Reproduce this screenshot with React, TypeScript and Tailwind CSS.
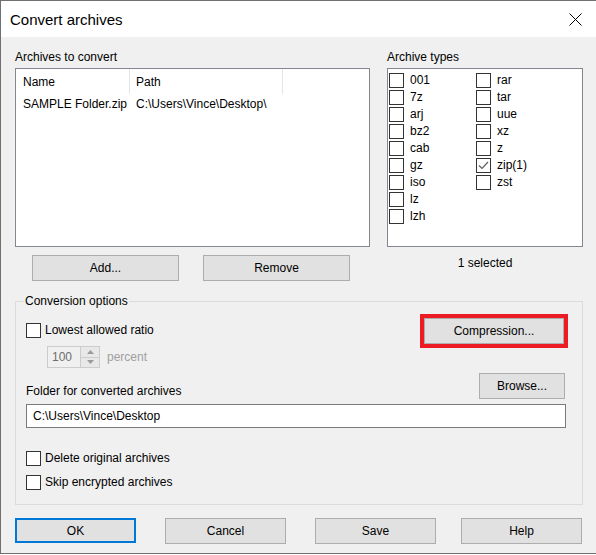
import React from 'react';

const archiveTypesLeft = ['001', '7z', 'arj', 'bz2', 'cab', 'gz', 'iso', 'lz', 'lzh'];
const archiveTypesRight = ['rar', 'tar', 'uue', 'xz', 'z', 'zip(1)', 'zst'];

function CheckBox({ checked = false }: { checked?: boolean }) {
  return (
    <span className="w-[15px] h-[15px] shrink-0 border border-[#333333] bg-white flex items-center justify-center">
      {checked && (
        <svg width="11" height="9" viewBox="0 0 11 9" fill="none">
          <path d="M1 4.5 L4 7.5 L10 1" stroke="#5f5f5f" strokeWidth="1.2" />
        </svg>
      )}
    </span>
  );
}

function TypeRow({ label }: { label: string }) {
  return (
    <div className="h-[17px] flex items-center gap-[6px]">
      <CheckBox checked={label === 'zip(1)'} />
      <span className="leading-[15px]">{label}</span>
    </div>
  );
}

function Button({ children, className = '' }: { children: React.ReactNode; className?: string }) {
  return (
    <button
      type="button"
      className={`h-[26px] bg-[#e1e1e1] border border-[#adadad] flex items-center justify-center text-[12px] text-black ${className}`}
    >
      {children}
    </button>
  );
}

function CheckLine({ label }: { label: string }) {
  return (
    <label className="h-[16px] flex items-center gap-[4px]">
      <CheckBox />
      <span>{label}</span>
    </label>
  );
}

export default function App() {
  return (
    <div
      className="w-[596px] h-[555px] bg-white text-[12px] leading-[16px] text-black"
      style={{ fontFamily: '"Liberation Sans", Arial, sans-serif' }}
    >
      <div className="h-[554px] bg-[#f0f0f0] border-l border-t border-b border-[#707070] flex flex-col">
        {/* Title bar */}
        <div className="h-[36px] bg-white flex items-center justify-between pl-[9px] pr-[14px]">
          <span className="text-[15px] mt-[2px]">Convert archives</span>
          <svg width="13" height="13" viewBox="0 0 13 13" className="mt-[1px]">
            <path d="M0.5 0.5 L12.5 12.5 M12.5 0.5 L0.5 12.5" stroke="#000" strokeWidth="1" />
          </svg>
        </div>

        <div className="flex flex-col pl-[14px] pr-[13px] pt-[12px]">
          <div className="flex justify-between">
            {/* Archives to convert */}
            <div className="w-[355px] flex flex-col">
              <div className="h-[16px]">Archives to convert</div>
              <div className="mt-[3px] h-[179px] bg-white border border-[#828790] flex flex-col">
                <div className="h-[25px] flex items-center">
                  <div className="w-[114px] h-full pl-[7px] flex items-center border-r border-[#e5e5e5]">Name</div>
                  <div className="w-[153px] h-full pl-[6px] flex items-center border-r border-[#e5e5e5]">Path</div>
                </div>
                <div className="h-[20px] flex items-center">
                  <div className="w-[114px] pl-[7px] whitespace-nowrap overflow-hidden">SAMPLE Folder.zip</div>
                  <div className="w-[153px] pl-[6px] whitespace-nowrap overflow-hidden">C:\Users\Vince\Desktop\</div>
                </div>
              </div>
              <div className="mt-[8px] flex">
                <Button className="ml-[17px] w-[147px]">Add...</Button>
                <Button className="ml-[24px] w-[147px]">Remove</Button>
              </div>
            </div>

            {/* Archive types */}
            <div className="w-[196px] flex flex-col">
              <div className="h-[16px]">Archive types</div>
              <div className="mt-[3px] h-[179px] bg-white border border-[#828790] flex pt-[3px] pl-[1px]">
                <div className="w-[87px] flex flex-col">
                  {archiveTypesLeft.map((t) => (
                    <TypeRow key={t} label={t} />
                  ))}
                </div>
                <div className="flex flex-col">
                  {archiveTypesRight.map((t) => (
                    <TypeRow key={t} label={t} />
                  ))}
                </div>
              </div>
              <div className="mt-[8px] text-center">1 selected</div>
            </div>
          </div>

          {/* Conversion options */}
          <fieldset className="mt-[12px] border border-[#dcdcdc] pl-[10px] pr-[16px] pt-[5px] pb-[14px]">
            <legend className="ml-[-2px] px-[1px] leading-[16px]">Conversion options</legend>
            <div className="flex justify-between items-start">
              <div className="flex flex-col">
                <div className="mt-[8px]">
                  <CheckLine label="Lowest allowed ratio" />
                </div>
                <div className="mt-[8px] ml-[21px] flex items-center">
                  <div className="w-[53px] h-[22px] border border-[#cccccc] flex">
                    <div className="w-[33px] flex items-center pl-[4px] text-[#6d6d6d]">100</div>
                    <div className="w-[19px] flex flex-col border-l border-[#cccccc]">
                      <div className="flex-1 flex items-center justify-center border-b border-[#cccccc] bg-[#e8e8e8]">
                        <svg width="7" height="4" viewBox="0 0 7 4">
                          <path d="M0 4 L3.5 0 L7 4 Z" fill="#9b9b9b" />
                        </svg>
                      </div>
                      <div className="flex-1 flex items-center justify-center bg-[#e8e8e8]">
                        <svg width="7" height="4" viewBox="0 0 7 4">
                          <path d="M0 0 L3.5 4 L7 0 Z" fill="#9b9b9b" />
                        </svg>
                      </div>
                    </div>
                  </div>
                  <span className="ml-[7px] text-[#a0a0a0]">percent</span>
                </div>
              </div>
              <div className="mr-[-2px] border-[4px] border-[#ed1c24]">
                <Button className="w-[140px]">Compression...</Button>
              </div>
            </div>

            <div className="mt-[5px] flex justify-between items-end">
              <span>Folder for converted archives</span>
              <Button className="w-[86px] h-[25px] mr-[1px]">Browse...</Button>
            </div>
            <div className="mt-[5px] h-[24px] bg-white border border-[#7a7a7a] flex items-center pl-[6px]">
              C:\Users\Vince\Desktop
            </div>

            <div className="mt-[22px] flex flex-col gap-[8px]">
              <CheckLine label="Delete original archives" />
              <CheckLine label="Skip encrypted archives" />
            </div>
          </fieldset>

          {/* Dialog buttons */}
          <div className="mt-[13px] flex">
            <button
              type="button"
              className="w-[121px] h-[25px] bg-[#e1e1e1] border-2 border-[#0078d7] flex items-center justify-center"
            >
              OK
            </button>
            <Button className="ml-[29px] w-[121px] h-[25px]">Cancel</Button>
            <Button className="ml-[29px] w-[121px] h-[25px]">Save</Button>
            <Button className="ml-[25px] w-[121px] h-[25px]">Help</Button>
          </div>
        </div>
      </div>
    </div>
  );
}
